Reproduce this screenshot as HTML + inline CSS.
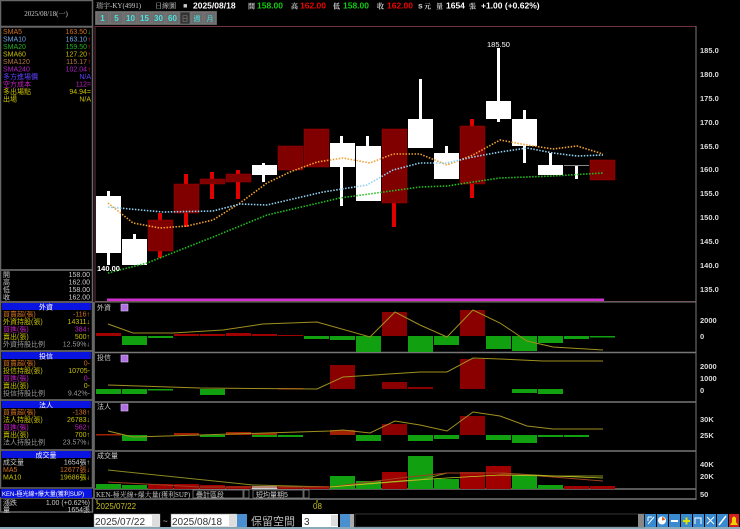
<!DOCTYPE html>
<html><head><meta charset="utf-8"><style>
html,body{margin:0;padding:0;background:#000;width:740px;height:529px;overflow:hidden}
svg{display:block}
text{font-family:"Liberation Sans","Noto Sans CJK TC",sans-serif}
.s{font-family:"Liberation Serif","Noto Serif CJK SC",serif;font-size:7px}
</style></head><body>
<svg width="740" height="529" viewBox="0 0 740 529" xmlns="http://www.w3.org/2000/svg">
<rect width="740" height="529" fill="#000"/>
<g fill="none" stroke="#666" stroke-width="1.5">
<rect x="0.5" y="0.5" width="92" height="26"/>
<rect x="0.5" y="27" width="92" height="243"/>
<rect x="0.5" y="270" width="92" height="32"/>
<rect x="0.5" y="302" width="92" height="49"/>
<rect x="0.5" y="351" width="92" height="49"/>
<rect x="0.5" y="400" width="92" height="50"/>
<rect x="0.5" y="450" width="92" height="38"/>
<rect x="0.5" y="498" width="92" height="14"/>
</g>
<text x="46" y="16" class="s" fill="#ccc" text-anchor="middle">2025/08/18(一)</text>
<g class="s">
<text x="3" y="34" fill="#d07020">SMA5</text><text x="87" y="34" fill="#d07020" text-anchor="end">163.50</text><text x="87.5" y="34" fill="#2c2">↓</text>
<text x="3" y="41.5" fill="#70a8e8">SMA10</text><text x="87" y="41.5" fill="#70a8e8" text-anchor="end">163.10</text><text x="87.5" y="41.5" fill="#e22">↑</text>
<text x="3" y="49" fill="#20b020">SMA20</text><text x="87" y="49" fill="#20b020" text-anchor="end">159.50</text><text x="87.5" y="49" fill="#e22">↑</text>
<text x="3" y="56.5" fill="#c8c000">SMA60</text><text x="87" y="56.5" fill="#c8c000" text-anchor="end">127.20</text><text x="87.5" y="56.5" fill="#e22">↑</text>
<text x="3" y="64" fill="#b07840">SMA120</text><text x="87" y="64" fill="#b07840" text-anchor="end">115.17</text><text x="87.5" y="64" fill="#e22">↑</text>
<text x="3" y="71.5" fill="#b020c8">SMA240</text><text x="87" y="71.5" fill="#b020c8" text-anchor="end">102.04</text><text x="87.5" y="71.5" fill="#e22">↑</text>
<text x="3" y="79" fill="#6040ff">多方進場價</text><text x="91" y="79" fill="#6040ff" text-anchor="end">N/A</text>
<text x="3" y="86.5" fill="#c020c0">空方成本</text><text x="91" y="86.5" fill="#c020c0" text-anchor="end">112=</text>
<text x="3" y="94" fill="#c8c000">多出場點</text><text x="91" y="94" fill="#c8c000" text-anchor="end">94.94=</text>
<text x="3" y="101.5" fill="#c8c000">出場</text><text x="91" y="101.5" fill="#c8c000" text-anchor="end">N/A</text>
</g>
<g class="s" fill="#ccc">
<text x="3" y="277">開</text><text x="90" y="277" text-anchor="end">158.00</text>
<text x="3" y="284.5">高</text><text x="90" y="284.5" text-anchor="end">162.00</text>
<text x="3" y="292">低</text><text x="90" y="292" text-anchor="end">158.00</text>
<text x="3" y="299.5">收</text><text x="90" y="299.5" text-anchor="end">162.00</text>
</g>
<g fill="#0a14e0"><rect x="2" y="303" width="89" height="7"/><rect x="2" y="352" width="89" height="7"/><rect x="2" y="401" width="89" height="7"/><rect x="2" y="451" width="89" height="7"/><rect x="1" y="489" width="91" height="9"/></g>
<g class="s" fill="#fff" text-anchor="middle"><text x="46" y="309.5">外資</text><text x="46" y="358.5">投信</text><text x="46" y="407.5">法人</text><text x="46" y="457.5">成交量</text></g>
<g class="s" font-size="6.5">
<text x="3" y="316.5" fill="#d07020">買賣超(張)</text><text x="90" y="316.5" fill="#d07020" text-anchor="end">-116↑</text>
<text x="3" y="324" fill="#c8c000">外資持股(張)</text><text x="90" y="324" fill="#c8c000" text-anchor="end">14311↓</text>
<text x="3" y="331.5" fill="#c020c0">買進(張)</text><text x="90" y="331.5" fill="#c020c0" text-anchor="end">384↑</text>
<text x="3" y="339" fill="#c8c000">賣出(張)</text><text x="90" y="339" fill="#c8c000" text-anchor="end">500↑</text>
<text x="3" y="346.5" fill="#999">外資持股比例</text><text x="90" y="346.5" fill="#999" text-anchor="end">12.59%↓</text>
<text x="3" y="365.5" fill="#d07020">買賣超(張)</text><text x="90" y="365.5" fill="#d07020" text-anchor="end">0-</text>
<text x="3" y="373" fill="#c8c000">投信持股(張)</text><text x="90" y="373" fill="#c8c000" text-anchor="end">10705-</text>
<text x="3" y="380.5" fill="#c020c0">買進(張)</text><text x="90" y="380.5" fill="#c020c0" text-anchor="end">0-</text>
<text x="3" y="388" fill="#c8c000">賣出(張)</text><text x="90" y="388" fill="#c8c000" text-anchor="end">0-</text>
<text x="3" y="395.5" fill="#999">投信持股比例</text><text x="90" y="395.5" fill="#999" text-anchor="end">9.42%-</text>
<text x="3" y="414.5" fill="#d07020">買賣超(張)</text><text x="90" y="414.5" fill="#d07020" text-anchor="end">-138↑</text>
<text x="3" y="422" fill="#c8c000">法人持股(張)</text><text x="90" y="422" fill="#c8c000" text-anchor="end">26783↓</text>
<text x="3" y="429.5" fill="#c020c0">買進(張)</text><text x="90" y="429.5" fill="#c020c0" text-anchor="end">562↑</text>
<text x="3" y="437" fill="#c8c000">賣出(張)</text><text x="90" y="437" fill="#c8c000" text-anchor="end">700↑</text>
<text x="3" y="444.5" fill="#999">法人持股比例</text><text x="90" y="444.5" fill="#999" text-anchor="end">23.57%↓</text>
<text x="3" y="464.5" fill="#ccc">成交量</text><text x="90" y="464.5" fill="#ccc" text-anchor="end">1654張↑</text>
<text x="3" y="472" fill="#d07020">MA5</text><text x="90" y="472" fill="#d07020" text-anchor="end">12677張↓</text>
<text x="3" y="479.5" fill="#c8c000">MA10</text><text x="90" y="479.5" fill="#c8c000" text-anchor="end">19686張↓</text>
<text x="2" y="496" fill="#fff" font-size="6">KEN-極光線+爆大量(獲利SUP)</text>
<text x="3" y="505" fill="#ccc">漲跌</text><text x="90" y="505" fill="#ccc" text-anchor="end">1.00 (+0.62%)</text>
<text x="3" y="512" fill="#ccc">量</text><text x="90" y="512" fill="#ccc" text-anchor="end">1654張</text>
</g>
<text x="96" y="8" class="s" fill="#ccc">瑞宇-KY(4991)　　日線圖　■</text>
<text x="193" y="8.5" font-size="8.5" font-weight="bold" fill="#fff">2025/08/18</text>
<g font-size="8.5" font-weight="bold">
<text x="248" y="8.5" class="s" fill="#ccc">開</text><text x="257" y="8.5" fill="#1c1">158.00</text>
<text x="291" y="8.5" class="s" fill="#ccc">高</text><text x="300" y="8.5" fill="#e00">162.00</text>
<text x="333" y="8.5" class="s" fill="#ccc">低</text><text x="343" y="8.5" fill="#1c1">158.00</text>
<text x="377" y="8.5" class="s" fill="#ccc">收</text><text x="387" y="8.5" fill="#e00">162.00</text>
<text x="418" y="8.5" fill="#ccc">s</text><text x="424" y="8.5" class="s" fill="#ccc">元</text>
<text x="436" y="8.5" class="s" fill="#ccc">量</text><text x="446" y="8.5" fill="#fff">1654</text><text x="469" y="8.5" class="s" fill="#ccc">張</text>
<text x="481" y="8.5" fill="#fff">+1.00 (+0.62%)</text>
</g>
<g>
<rect x="95" y="11" width="122" height="14" fill="#555"/>
<g fill="#6a6a6a" stroke="#888" stroke-width="0.5">
<rect x="96" y="12" width="13" height="12"/><rect x="110" y="12" width="13" height="12"/><rect x="124" y="12" width="13" height="12"/><rect x="138" y="12" width="13" height="12"/><rect x="152" y="12" width="13" height="12"/><rect x="166" y="12" width="13" height="12"/><rect x="180" y="12" width="10" height="12" fill="#333"/><rect x="191" y="12" width="12" height="12"/><rect x="204" y="12" width="12" height="12"/>
</g>
<g font-size="8" font-weight="bold" fill="#4de0e0" text-anchor="middle">
<text x="102.5" y="21">1</text><text x="116.5" y="21">5</text><text x="130.5" y="21">10</text><text x="144.5" y="21">15</text><text x="158.5" y="21">30</text><text x="172.5" y="21">60</text></g>
<g class="s" fill="#4de0e0" text-anchor="middle"><text x="185" y="21" fill="#888">日</text><text x="197" y="21">週</text><text x="210" y="21">月</text></g>
</g>
<rect x="95" y="26.5" width="601" height="275" fill="none" stroke="#703040" stroke-width="1"/>
<line x1="696" y1="26" x2="696" y2="500" stroke="#777"/>
<line x1="95" y1="302" x2="696" y2="302" stroke="#777"/>
<g font-size="7.5" font-weight="bold" fill="#ddd">
<text x="700" y="53">185.0</text><text x="700" y="77">180.0</text><text x="700" y="101">175.0</text><text x="700" y="125">170.0</text><text x="700" y="149">165.0</text><text x="700" y="172">160.0</text><text x="700" y="196">155.0</text><text x="700" y="220">150.0</text><text x="700" y="244">145.0</text><text x="700" y="268">140.0</text><text x="700" y="292">135.0</text>
</g>
<g fill="#fff">
<rect x="107" y="191" width="3" height="74"/><rect x="96" y="196" width="25" height="57"/>
<rect x="133" y="234" width="3" height="6"/><rect x="122" y="239" width="25" height="26"/>
<rect x="262" y="163" width="3" height="19"/><rect x="252" y="165" width="25" height="10"/>
<rect x="340" y="136" width="3" height="70"/><rect x="330" y="143" width="25" height="24"/>
<rect x="366" y="136" width="3" height="10"/><rect x="356" y="146" width="25" height="55"/>
<rect x="419" y="79" width="3" height="40"/><rect x="408" y="119" width="25" height="29"/>
<rect x="445" y="146" width="3" height="8"/><rect x="434" y="153" width="25" height="26"/>
<rect x="497" y="48" width="3" height="74"/><rect x="486" y="101" width="25" height="18"/>
<rect x="523" y="110" width="3" height="53"/><rect x="512" y="119" width="25" height="27"/>
<rect x="549" y="153" width="3" height="12"/><rect x="538" y="165" width="25" height="10"/>
<rect x="575" y="165" width="3" height="14"/>
</g>
<rect x="564" y="165" width="25" height="1" fill="#888"/>
<g fill="#e00000">
<rect x="158" y="213" width="4" height="45"/><rect x="184" y="174" width="4" height="53"/><rect x="210" y="172" width="4" height="27"/><rect x="236" y="170" width="4" height="29"/><rect x="392" y="196" width="4" height="31"/><rect x="470" y="119" width="4" height="79"/>
</g>
<g fill="#800000" stroke="#a00000" stroke-width="0.5">
<rect x="148" y="220" width="25" height="31"/><rect x="174" y="184" width="25" height="29"/><rect x="200" y="179" width="25" height="5"/><rect x="226" y="174" width="25" height="8"/>
<rect x="278" y="146" width="25" height="24"/><rect x="304" y="129" width="25" height="38"/><rect x="382" y="129" width="25" height="74"/><rect x="460" y="126" width="25" height="58"/><rect x="590" y="160" width="25" height="20"/>
</g>
<g fill="none" stroke-width="1.6" stroke-dasharray="1.5 1.5">
<polyline stroke="#f0a030" points="108,203 133,223 160,228 187,226 213,220 240,203 267,183 290,172 317,162 343,158 370,163 393,154 420,154 447,165 473,155 500,140 527,145 553,149 577,146 603,154"/>
<polyline stroke="#90d0f0" points="108,207 163,212 213,211 240,204 267,205 323,192 367,185 393,170 420,163 447,163 473,157 500,152 527,148 553,153 577,156 603,155"/>
<polyline stroke="#20c020" points="108,273 147,263 213,237 267,215 340,198 420,187 447,186 473,182 500,178 553,176 603,173"/>
</g>
<text x="97" y="271" font-size="7.5" font-weight="bold" fill="#fff">140.00</text>
<text x="487" y="47" font-size="7.5" fill="#fff">185.50</text>
<rect x="107" y="298.5" width="497" height="2.5" fill="#d030d0"/>
<g fill="none" stroke="#777" stroke-width="1.5">
<line x1="95" y1="352.5" x2="696" y2="352.5"/><line x1="95" y1="402" x2="696" y2="402"/><line x1="95" y1="451" x2="696" y2="451"/><line x1="95" y1="489" x2="696" y2="489"/><line x1="95" y1="499" x2="696" y2="499"/>
<line x1="94" y1="302" x2="94" y2="499"/>
</g>
<g class="s" fill="#ccc"><text x="97" y="310">外資</text><text x="97" y="360">投信</text><text x="97" y="409">法人</text><text x="97" y="458">成交量</text></g>
<g fill="#b070e0" stroke="#e0c0ff" stroke-width="0.6"><rect x="121" y="304" width="7" height="7"/><rect x="121" y="355" width="7" height="7"/><rect x="121" y="404" width="7" height="7"/></g>
<g font-size="7.5" font-weight="bold" fill="#ddd">
<text x="700" y="323">2000</text><text x="700" y="339">0</text>
<text x="700" y="369">2000</text><text x="700" y="381">1000</text><text x="700" y="393">0</text>
<text x="700" y="422">30K</text><text x="700" y="438">25K</text>
<text x="700" y="467">40K</text><text x="700" y="479">20K</text><text x="700" y="497">50</text>
</g>
<g fill="#a00000">
<rect x="96" y="333" width="25" height="3"/><rect x="174" y="334" width="25" height="2"/><rect x="200" y="334" width="25" height="2"/><rect x="226" y="333" width="25" height="3"/><rect x="252" y="334" width="25" height="2"/><rect x="278" y="335" width="25" height="1"/>
<rect x="382" y="312" width="25" height="24" fill="#8a0000"/><rect x="460" y="310" width="25" height="26" fill="#8a0000"/>
</g>
<g fill="#10a010">
<rect x="122" y="336" width="25" height="9"/><rect x="148" y="336" width="25" height="2"/><rect x="304" y="336" width="25" height="3"/><rect x="330" y="336" width="25" height="4"/><rect x="356" y="336" width="25" height="16"/><rect x="408" y="336" width="25" height="16"/><rect x="434" y="336" width="25" height="9"/><rect x="486" y="336" width="25" height="13"/><rect x="512" y="336" width="25" height="15"/><rect x="538" y="336" width="25" height="7"/><rect x="564" y="336" width="25" height="3"/><rect x="590" y="336" width="25" height="1.5"/>
</g>
<polyline fill="none" stroke="#a09020" stroke-width="1" points="108,324 133,333 173,333 223,330 263,324 317,322 370,337 395,312 420,325 447,337 473,310 500,323 527,341 553,347 603,350"/>
<g fill="#10a010"><rect x="96" y="389" width="25" height="5"/><rect x="122" y="389" width="25" height="5"/><rect x="148" y="389" width="25" height="1.5"/><rect x="200" y="389" width="25" height="6"/><rect x="512" y="389" width="25" height="4"/><rect x="538" y="389" width="25" height="5"/></g>
<g fill="#8a0000"><rect x="278" y="388" width="25" height="1.5"/><rect x="330" y="365" width="25" height="24"/><rect x="382" y="382" width="25" height="7"/><rect x="408" y="387" width="25" height="2"/><rect x="460" y="359" width="25" height="30"/></g>
<polyline fill="none" stroke="#a09020" stroke-width="1" points="108,385 200,388 317,389 343,377 420,372 447,372 473,358 500,359 543,361 603,361"/>
<g fill="#10a010"><rect x="122" y="435" width="25" height="6"/><rect x="200" y="435" width="25" height="2"/><rect x="252" y="435" width="25" height="2"/><rect x="278" y="435" width="25" height="2"/><rect x="356" y="435" width="25" height="6"/><rect x="408" y="435" width="25" height="6"/><rect x="434" y="435" width="25" height="4"/><rect x="486" y="435" width="25" height="5"/><rect x="512" y="435" width="25" height="8"/><rect x="538" y="435" width="25" height="2"/><rect x="564" y="435" width="25" height="2"/></g>
<g fill="#a02000"><rect x="96" y="434" width="25" height="1.5"/><rect x="174" y="433" width="25" height="2"/><rect x="226" y="432" width="25" height="3"/><rect x="252" y="433" width="25" height="2"/><rect x="330" y="430" width="25" height="5"/><rect x="382" y="424" width="25" height="11" fill="#8a0000"/><rect x="460" y="416" width="25" height="19" fill="#8a0000"/></g>
<polyline fill="none" stroke="#a09020" stroke-width="1" points="108,431 133,437 200,435 330,431 343,430 370,433 395,421 420,425 447,431 473,412 500,416 527,426 553,429 603,429"/>
<g fill="#10a010"><rect x="96" y="484" width="25" height="5"/><rect x="122" y="485" width="25" height="4"/><rect x="330" y="476" width="25" height="13"/><rect x="356" y="481" width="25" height="8"/><rect x="408" y="456" width="25" height="33"/><rect x="434" y="479" width="25" height="10"/><rect x="512" y="475" width="25" height="14"/><rect x="538" y="485" width="25" height="4"/></g>
<g fill="#a00000"><rect x="148" y="484" width="25" height="5"/><rect x="174" y="484" width="25" height="5"/><rect x="200" y="485" width="25" height="4"/><rect x="226" y="486" width="25" height="3"/><rect x="278" y="486" width="25" height="3"/><rect x="304" y="486" width="25" height="3"/><rect x="382" y="472" width="25" height="17"/><rect x="460" y="472" width="25" height="17"/><rect x="486" y="466" width="25" height="23"/><rect x="564" y="486" width="25" height="3"/><rect x="590" y="486" width="25" height="3"/></g>
<rect x="252" y="486" width="25" height="3" fill="#ccc"/>
<polyline fill="none" stroke="#8a8a20" stroke-width="1" points="108,470 253,485 330,487 420,480 447,473 500,473 553,476 603,476"/>
<polyline fill="none" stroke="#a04020" stroke-width="1" points="108,482 200,487 330,487 400,478 447,473 500,473 553,477 603,481"/>
<polyline fill="none" stroke="#c0d020" stroke-width="0.8" points="330,487 400,481 447,478 500,475 553,476 603,478"/>
<text x="96" y="497" class="s" fill="#ccc">KEN-極光線+爆大量(獲利SUP)</text>
<g fill="none" stroke="#aaa" stroke-width="0.6"><rect x="193" y="490" width="50" height="8"/><rect x="244" y="490" width="5" height="8"/><rect x="253" y="490" width="50" height="8"/><rect x="304" y="490" width="5" height="8"/></g>
<g class="s" fill="#ccc"><text x="196" y="497">疊計區段</text><text x="256" y="497">短均量期5</text></g>
<text x="96" y="509" font-size="8" fill="#c8c020">2025/07/22</text>
<text x="313" y="509" font-size="8" fill="#c8c020">08</text>
<line x1="97" y1="500" x2="97" y2="503" stroke="#c8c020"/><line x1="317" y1="500" x2="317" y2="503" stroke="#c8c020"/>
<rect x="0" y="527" width="740" height="2" fill="#8ab"/>
<g>
<rect x="94" y="514" width="66" height="13" fill="#fff" stroke="#888" stroke-width="0.5"/><rect x="152" y="515" width="7" height="11" fill="#ddd"/>
<text x="95" y="525" font-size="10" fill="#333" font-family="Liberation Serif">2025/07/22</text>
<text x="163" y="524" font-size="8" fill="#ccc">~</text>
<rect x="171" y="514" width="66" height="13" fill="#fff" stroke="#888" stroke-width="0.5"/><rect x="229" y="515" width="7" height="11" fill="#ddd"/>
<text x="172" y="525" font-size="10" fill="#333" font-family="Liberation Serif">2025/08/18</text>
<rect x="237" y="514" width="10" height="13" fill="#4a90d0"/>
<text x="251" y="525" font-size="11" fill="#bbb" font-family="Noto Serif CJK SC,serif">保留空間</text>
<rect x="302" y="514" width="36" height="13" fill="#fff"/><rect x="331" y="515" width="7" height="11" fill="#ddd"/>
<text x="304" y="525" font-size="10" fill="#333" font-family="Liberation Serif">3</text>
<rect x="340" y="514" width="10" height="13" fill="#4a90d0"/>
<rect x="350" y="514" width="4" height="13" fill="#aaa"/>
<rect x="355" y="514" width="290" height="13" fill="#000" stroke="#666" stroke-width="0.5"/>
<rect x="638" y="514" width="6" height="13" fill="#888"/>
<g fill="#3a8ad0"><rect x="645" y="514" width="11" height="13"/><rect x="657" y="514" width="11" height="13"/><rect x="669" y="514" width="11" height="13"/><rect x="681" y="514" width="11" height="13"/><rect x="693" y="514" width="11" height="13"/><rect x="705" y="514" width="11" height="13"/><rect x="717" y="514" width="11" height="13"/></g>
<rect x="729" y="514" width="10" height="13" fill="#d02020"/>
<path d="M648 524 L654 517 M648 517 L648 521 M648 517 L652 517" stroke="#fff" fill="none" stroke-width="1"/>
<circle cx="662" cy="520.5" r="4" fill="#fff"/><path d="M662 520.5 L662 517 A3.5 3.5 0 0 1 665 520 Z" fill="#e06020"/>
<rect x="671" y="520" width="7" height="2" fill="#fff"/>
<rect x="683" y="520" width="7" height="2" fill="#e0e000"/><rect x="685.5" y="517.5" width="2" height="7" fill="#e0e000"/>
<path d="M695 524 L695 518 L701 518 L701 524" stroke="#fff" fill="none"/>
<path d="M707 517 L714 524 M714 517 L707 524" stroke="#fff" fill="none"/>
<path d="M719 525 L726 516" stroke="#fff" stroke-width="1.5"/>
<path d="M730 525 L738 525 L736 522 L736 518 Q734 515 732 518 L732 522 Z" fill="#f0d000"/>
</g>
</svg>
</body></html>
